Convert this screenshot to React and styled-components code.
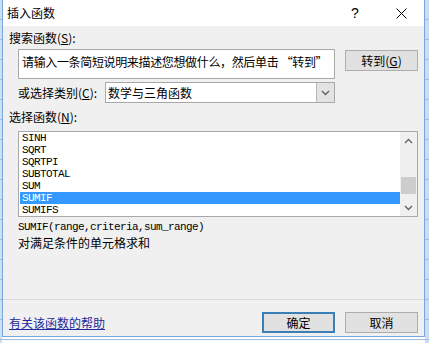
import React from 'react';
import styled, { createGlobalStyle } from 'styled-components';

const GlobalStyle = createGlobalStyle`
  body {
    margin: 0;
    font-family: "Noto Sans CJK SC", "Microsoft YaHei", sans-serif;
    font-size: 12px;
    color: #000;
  }
`;

const functions = ['SINH', 'SQRT', 'SQRTPI', 'SUBTOTAL', 'SUM', 'SUMIF', 'SUMIFS'];

const Desktop = styled.div`
  width: 429px;
  height: 343px;
  overflow: hidden;
  background-color: #fff;
  background-image:
    repeating-linear-gradient(to bottom, transparent 0 19px, #9fbbdb 19px 20px),
    linear-gradient(to right, #cddff2 0 2px, transparent 2px 425px, #c9dcf1 425px);
  display: flex;
  align-items: flex-start;
`;

const Dialog = styled.div`
  margin-left: 2px;
  width: 423px;
  height: 337px;
  box-sizing: border-box;
  border: 1px solid #7aa7d9;
  border-top: none;
  background: #f0f0f0;
  display: flex;
  flex-direction: column;
`;

const TitleBar = styled.div`
  height: 26px;
  background: #fff;
  display: flex;
  align-items: center;
  padding: 0 0 0 4px;
  flex-shrink: 0;
`;

const Title = styled.div`
  flex: 1;
  font-size: 12px;
  line-height: 14px;
  margin-top: -1px;
`;

const TitleButton = styled.div`
  width: ${({ $w }) => $w}px;
  height: 26px;
  display: flex;
  align-items: center;
  justify-content: center;
  font-family: "Liberation Sans", sans-serif;
  font-size: 14px;
`;

const Body = styled.div`
  flex: 1;
  display: flex;
  flex-direction: column;
  padding: 0 6px 3px;
`;

const Label = styled.div`
  line-height: 14px;
  height: 14px;
  margin-top: ${({ $mt }) => $mt}px;
  white-space: nowrap;
`;

const Row = styled.div`
  display: flex;
  align-items: flex-start;
  padding-left: 9px;
  margin-top: ${({ $mt }) => $mt}px;
`;

const SearchBox = styled.div`
  width: 317px;
  height: 30px;
  box-sizing: border-box;
  border: 1px solid #a8a8a8;
  background: #fff;
  padding: 5px 0 0 3px;
  line-height: 14px;
  letter-spacing: -0.35px;
  white-space: nowrap;
`;

const Button = styled.div`
  width: ${({ $w }) => $w || 73}px;
  height: 21px;
  box-sizing: border-box;
  background: #e1e1e1;
  border: ${({ $default }) => ($default ? '2px solid #3b7fb6' : '1px solid #adadad')};
  display: flex;
  align-items: center;
  justify-content: center;
  line-height: 14px;
  margin-left: ${({ $ml }) => $ml || 0}px;
  margin-top: ${({ $mt }) => $mt || 0}px;
`;

const CategoryLabel = styled.div`
  width: 87px;
  height: 21px;
  line-height: 21px;
  white-space: nowrap;
`;

const Select = styled.div`
  width: 230px;
  height: 21px;
  box-sizing: border-box;
  border: 1px solid #a8a8a8;
  background: #fff;
  display: flex;
`;

const SelectText = styled.div`
  flex: 1;
  padding-left: 2px;
  line-height: 19px;
`;

const SelectArrow = styled.div`
  width: 17px;
  background: #e3e3e3;
  border-left: 1px solid #b9b9b9;
  display: flex;
  align-items: center;
  justify-content: center;
`;

const ListBox = styled.div`
  margin: 7px 0 0 9px;
  width: 400px;
  height: 86px;
  box-sizing: border-box;
  border: 1px solid #a8a8a8;
  background: #fff;
  display: flex;
`;

const Items = styled.div`
  flex: 1;
  padding-left: 1px;
`;

const Item = styled.div`
  height: 12px;
  line-height: 12px;
  padding-left: 2px;
  font-family: "Liberation Mono", monospace;
  font-size: 11px;
  letter-spacing: -0.6px;
  background: ${({ $selected }) => ($selected ? '#3399ff' : 'transparent')};
  color: ${({ $selected }) => ($selected ? '#fff' : '#000')};
`;

const ScrollBar = styled.div`
  width: 17px;
  background: #f0f0f0;
  display: flex;
  flex-direction: column;
  align-items: center;
`;

const ScrollArrow = styled.div`
  height: 17px;
  width: 17px;
  display: flex;
  align-items: center;
  justify-content: center;
`;

const ScrollTrack = styled.div`
  flex: 1;
  width: 100%;
  display: flex;
  flex-direction: column;
`;

const Thumb = styled.div`
  margin-top: 28px;
  height: 17px;
  margin-left: 1px;
  width: 15px;
  background: #cdcdcd;
`;

const Syntax = styled.div`
  margin: 4px 0 0 9px;
  height: 12px;
  line-height: 12px;
  font-family: "Liberation Mono", monospace;
  font-size: 11px;
  letter-spacing: -0.6px;
`;

const Desc = styled.div`
  margin: 2px 0 0 9px;
  line-height: 15px;
  font-size: 12px;
`;

const Separator = styled.div`
  margin: auto -6px 0;
  height: 1px;
  background: #dcdcdc;
`;

const Footer = styled.div`
  margin-top: 12px;
  display: flex;
  align-items: center;
`;

const HelpLink = styled.a`
  flex: 1;
  color: #1c2a9c;
  text-decoration: underline;
  line-height: 14px;
`;

const Chevron = ({ dir = 'down', color = '#606060' }) => (
  <svg width="9" height="6" viewBox="0 0 9 6">
    <polyline
      points={dir === 'down' ? '1,1 4.5,4.5 8,1' : '1,5 4.5,1.5 8,5'}
      fill="none"
      stroke={color}
      strokeWidth="1.3"
    />
  </svg>
);

const CloseIcon = () => (
  <svg width="11" height="11" viewBox="0 0 11 11">
    <line x1="0.5" y1="0.5" x2="10.5" y2="10.5" stroke="#000" strokeWidth="1" />
    <line x1="10.5" y1="0.5" x2="0.5" y2="10.5" stroke="#000" strokeWidth="1" />
  </svg>
);

const App = () => {
  return (
    <Desktop>
      <GlobalStyle />
      <Dialog>
        <TitleBar>
          <Title>插入函数</Title>
          <TitleButton $w={46}>?</TitleButton>
          <TitleButton $w={46}><CloseIcon /></TitleButton>
        </TitleBar>
        <Body>
          <Label $mt={5}>搜索函数(<u>S</u>):</Label>
          <Row $mt={4}>
            <SearchBox>请输入一条简短说明来描述您想做什么，然后单击 “转到”</SearchBox>
            <Button $ml={10} $mt={1}>转到(<u>G</u>)</Button>
          </Row>
          <Row $mt={3}>
            <CategoryLabel>或选择类别(<u>C</u>):</CategoryLabel>
            <Select>
              <SelectText>数学与三角函数</SelectText>
              <SelectArrow><Chevron /></SelectArrow>
            </Select>
          </Row>
          <Label $mt={7}>选择函数(<u>N</u>):</Label>
          <ListBox>
            <Items>
              {functions.map((name) => (
                <Item key={name} $selected={name === 'SUMIF'}>{name}</Item>
              ))}
            </Items>
            <ScrollBar>
              <ScrollArrow><Chevron dir="up" /></ScrollArrow>
              <ScrollTrack><Thumb /></ScrollTrack>
              <ScrollArrow><Chevron /></ScrollArrow>
            </ScrollBar>
          </ListBox>
          <Syntax>SUMIF(range,criteria,sum_range)</Syntax>
          <Desc>对满足条件的单元格求和</Desc>
          <Separator />
          <Footer>
            <HelpLink href="#">有关该函数的帮助</HelpLink>
            <Button $default>确定</Button>
            <Button $ml={10}>取消</Button>
          </Footer>
        </Body>
      </Dialog>
    </Desktop>
  );
};

export default App;
